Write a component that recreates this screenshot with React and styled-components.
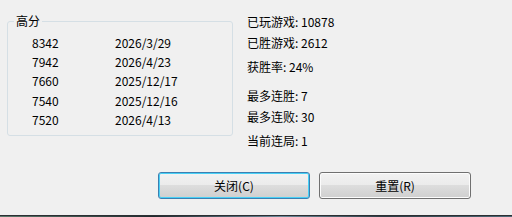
import React from 'react'
import styled, { createGlobalStyle } from 'styled-components'

const scores = [
  { score: 8342, date: '2026/3/29' },
  { score: 7942, date: '2026/4/23' },
  { score: 7660, date: '2025/12/17' },
  { score: 7540, date: '2025/12/16' },
  { score: 7520, date: '2026/4/13' },
]

const stats = [
  { label: '已玩游戏', value: '10878', gap: 0 },
  { label: '已胜游戏', value: '2612', gap: 5 },
  { label: '获胜率', value: '24%', gap: 8 },
  { label: '最多连胜', value: '7', gap: 13 },
  { label: '最多连败', value: '30', gap: 5 },
  { label: '当前连局', value: '1', gap: 8 },
]

const GlobalStyle = createGlobalStyle`
  html, body {
    margin: 0;
    padding: 0;
    background: #f0f0f0;
  }
  body {
    font-family: "Noto Sans CJK SC", "Noto Sans", sans-serif;
    font-size: 12px;
    color: #000;
  }
`

const Window = styled.div`
  width: 512px;
  height: 217px;
  background: #f0f0f0;
  display: flex;
  flex-direction: column;
  overflow: hidden;
`

const Body = styled.div`
  height: 215px;
  display: flex;
  flex-direction: column;
`

const Top = styled.div`
  height: 172px;
  display: flex;
  align-items: flex-start;
`

const Group = styled.fieldset`
  margin: 13px 0 0 7px;
  padding: 0;
  width: 224px;
  height: 121px;
  border: 1px solid #d5dfe5;
  border-radius: 3px;
  box-sizing: content-box;
  legend {
    margin-left: 6px;
    padding: 0 2px;
    line-height: 16px;
    font-size: 12px;
  }
`

const ScoreList = styled.div`
  padding: 4px 0 0 24px;
  display: flex;
  flex-direction: column;
`

const ScoreRow = styled.div`
  display: grid;
  grid-template-columns: 83px 1fr;
  height: 19.2px;
  line-height: 19px;
`

const Stats = styled.div`
  margin-left: 14px;
  padding-top: 14px;
  display: flex;
  flex-direction: column;
`

const Stat = styled.div`
  line-height: 16px;
  margin-top: ${p => p.$gap}px;
  white-space: nowrap;
`

const Buttons = styled.div`
  display: flex;
  justify-content: flex-end;
  gap: 9px;
  padding-right: 41px;
`

const Button = styled.button`
  width: 152px;
  height: 27px;
  box-sizing: border-box;
  padding: 0;
  font-family: inherit;
  font-size: 12px;
  color: #000;
  border-radius: 3px;
  border: 1px solid ${p => (p.$focused ? '#3c7fb1' : '#707070')};
  box-shadow: inset 0 0 0 1px ${p => (p.$focused ? '#48d0f6' : '#fcfcfc')};
  background: linear-gradient(#f2f2f2 0%, #ebebeb 48%, #dddddd 50%, #cfcfcf 100%);
  cursor: default;
`

const Frame = styled.div`
  height: 2px;
  border-top: 1px solid #2c2f33;
  background: linear-gradient(90deg, #5b7a6c, #1f2a2e 30%, #6b8a9a 55%, #2d3c44 75%, #4d6a78);
  box-sizing: border-box;
`

export default function App() {
  return (
    <Window>
      <GlobalStyle />
      <Body>
        <Top>
          <Group>
            <legend>高分</legend>
            <ScoreList>
              {scores.map(s => (
                <ScoreRow key={s.date + s.score}>
                  <span>{s.score}</span>
                  <span>{s.date}</span>
                </ScoreRow>
              ))}
            </ScoreList>
          </Group>
          <Stats>
            {stats.map(s => (
              <Stat key={s.label} $gap={s.gap}>
                {s.label}: {s.value}
              </Stat>
            ))}
          </Stats>
        </Top>
        <Buttons>
          <Button $focused>关闭(C)</Button>
          <Button>重置(R)</Button>
        </Buttons>
      </Body>
      <Frame />
    </Window>
  )
}
